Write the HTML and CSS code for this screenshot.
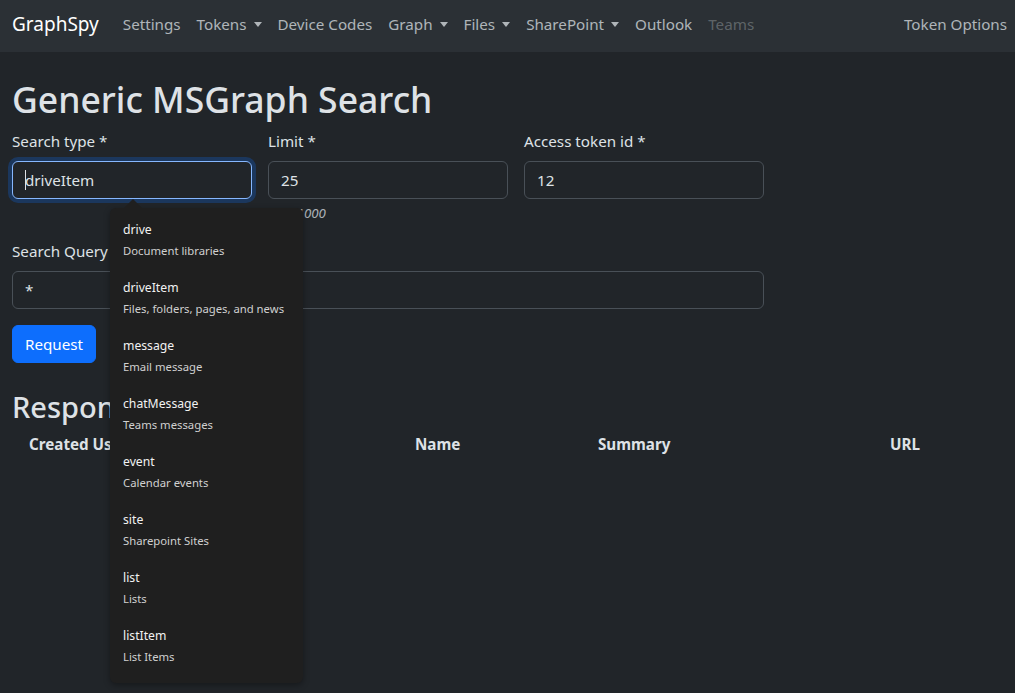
FILE: index.html
```html
<!DOCTYPE html>
<html lang="en">
<head>
<meta charset="utf-8">
<title>GraphSpy - Generic MSGraph Search</title>
<link rel="stylesheet" href="styles.css">
</head>
<body>
<nav class="navbar">
  <a class="brand">GraphSpy</a>
  <ul class="nav">
    <li class="nav-link">Settings</li>
    <li class="nav-link dropdown">Tokens</li>
    <li class="nav-link">Device Codes</li>
    <li class="nav-link dropdown">Graph</li>
    <li class="nav-link dropdown">Files</li>
    <li class="nav-link dropdown">SharePoint</li>
    <li class="nav-link">Outlook</li>
    <li class="nav-link disabled">Teams</li>
  </ul>
  <div class="nav-right nav-link">Token Options</div>
</nav>

<main class="container">
  <h1>Generic MSGraph Search</h1>
  <div class="form-row">
    <div class="field">
      <label class="form-label">Search type *</label>
      <div class="form-control focus"><span class="caret"></span>driveItem</div>
    </div>
    <div class="field">
      <label class="form-label">Limit *</label>
      <div class="form-control">25</div>
      <div class="form-text">Max 1000</div>
    </div>
    <div class="field">
      <label class="form-label">Access token id *</label>
      <div class="form-control">12</div>
    </div>
  </div>
  <div class="query">
    <label class="form-label">Search Query</label>
    <div class="form-control">*</div>
  </div>
  <button class="btn">Request</button>

  <h2>Response</h2>
  <div class="table-head">
    <div class="th c1">Created User</div>
    <div class="th c2">Name</div>
    <div class="th c3">Summary</div>
    <div class="th c4">URL</div>
  </div>
</main>

<div class="datalist">
  <div class="pointer"></div>
  <div class="opt"><div class="opt-v">drive</div><div class="opt-d">Document libraries</div></div>
  <div class="opt"><div class="opt-v">driveItem</div><div class="opt-d">Files, folders, pages, and news</div></div>
  <div class="opt"><div class="opt-v">message</div><div class="opt-d">Email message</div></div>
  <div class="opt"><div class="opt-v">chatMessage</div><div class="opt-d">Teams messages</div></div>
  <div class="opt"><div class="opt-v">event</div><div class="opt-d">Calendar events</div></div>
  <div class="opt"><div class="opt-v">site</div><div class="opt-d">Sharepoint Sites</div></div>
  <div class="opt"><div class="opt-v">list</div><div class="opt-d">Lists</div></div>
  <div class="opt"><div class="opt-v">listItem</div><div class="opt-d">List Items</div></div>
</div>
</body>
</html>
```

FILE: styles.css
```css
* { box-sizing: border-box; }
html, body { margin: 0; padding: 0; }
body {
  background: #212529;
  color: #dee2e6;
  font-family: "Noto Sans", "Open Sans", sans-serif;
  font-size: 15.2px;
  line-height: 24px;
  width: 1015px;
  height: 693px;
  overflow: hidden;
  position: relative;
}
.navbar {
  height: 52px;
  background: #2b3035;
  display: flex;
  align-items: center;
  padding: 0 0 4px 12px;
}
.brand {
  font-size: 19px;
  color: #fff;
  margin-right: 16px;
  line-height: 30px;
}
.nav {
  list-style: none;
  margin: 0;
  padding: 0;
  display: flex;
}
.nav-link {
  padding: 8px;
  color: rgba(222, 226, 230, 0.75);
}
.nav-link.dropdown::after {
  content: "";
  display: inline-block;
  margin-left: 7px;
  vertical-align: 3px;
  border-top: 5px solid;
  border-left: 4.5px solid transparent;
  border-right: 4.5px solid transparent;
}
.nav-link.disabled { color: rgba(222, 226, 230, 0.3); }
.nav-right { margin-left: auto; }

.container { padding: 26px 12px 0; }
h1 {
  font-size: 35.5px;
  font-weight: 500;
  line-height: 1.2;
  margin: 0 0 8px;
  color: #dee2e6;
}
h2 {
  font-size: 29px;
  font-weight: 500;
  line-height: 1.2;
  margin: 27px 0 0;
}
.form-row { display: flex; gap: 16px; height: 110px; }
.field { width: 240px; }
.form-label { display: block; margin-bottom: 8px; }
.form-control {
  height: 38px;
  padding: 6px 12px;
  border: 1px solid #495057;
  border-radius: 6px;
  background: #212529;
  color: #dee2e6;
  position: relative;
}
.form-control.focus {
  border-color: #86b7fe;
  box-shadow: 0 0 0 4px rgba(13, 110, 253, 0.25);
}
.caret {
  position: absolute;
  left: 12px;
  top: 8px;
  width: 1px;
  height: 20px;
  background: #dee2e6;
}
.form-text {
  margin-top: 4px;
  font-size: 13.3px;
  line-height: 21px;
  font-style: italic;
  color: rgba(222, 226, 230, 0.75);
}
.query { width: 752px; }
.btn {
  margin-top: 16px;
  background: #0d6efd;
  color: #fff;
  border: 1px solid #0d6efd;
  border-radius: 6px;
  padding: 6px 12px;
  font: inherit;
  line-height: 24px;
  height: 38px;
}
.table-head {
  display: grid;
  grid-template-columns: 386px 183px 292px 1fr;
  padding: 8px 0 8px 17px;
  font-weight: 700;
}

.datalist {
  position: absolute;
  left: 110px;
  top: 208px;
  width: 193px;
  height: 475px;
  background: #1f1f1f;
  border-radius: 6px;
  box-shadow: 0 2px 6px rgba(0, 0, 0, 0.35);
  padding: 12px 13px;
}
.pointer {
  position: absolute;
  left: 14px;
  top: -9px;
  width: 0;
  height: 0;
  border-left: 9px solid transparent;
  border-right: 9px solid transparent;
  border-bottom: 9px solid #1f1f1f;
}
.opt { height: 58px; white-space: nowrap; }
.opt-v { font-size: 12.2px; color: #f2f2f2; line-height: 20px; }
.opt-d { font-size: 11.3px; color: #d0d0d0; line-height: 22px; }
```
